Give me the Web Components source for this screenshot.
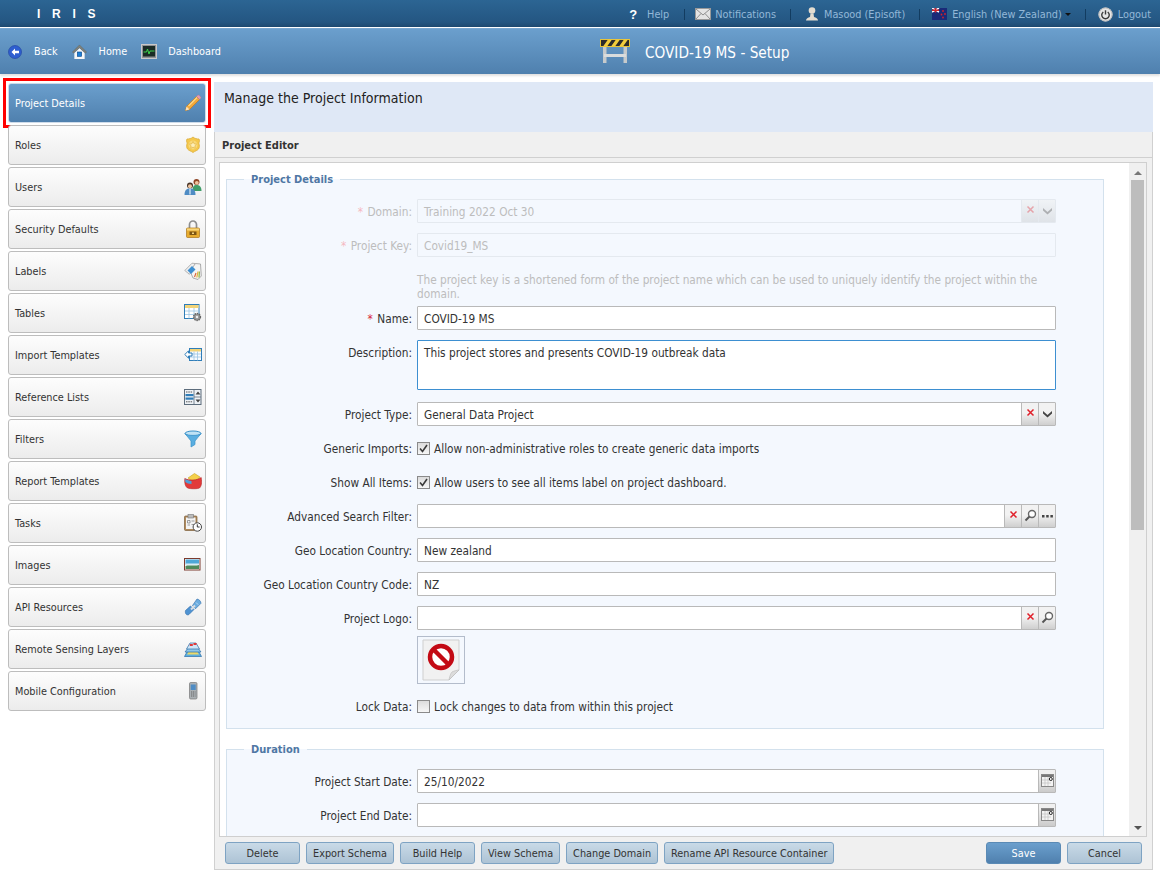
<!DOCTYPE html>
<html lang="en">
<head>
<meta charset="utf-8">
<title>IRIS - Setup</title>
<style>
  html, body { margin: 0; height: 881px; overflow: hidden; background: #fff; }
  body { font: 11.75px "DejaVu Sans Condensed", "DejaVu Sans", Tahoma, sans-serif; color: #333; }
</style>
</head>
<body>
<iris-topbar></iris-topbar>
<iris-navbar></iris-navbar>
<iris-layout>
  <side-nav slot="side">
    <side-item active icon="pencil">Project Details</side-item>
    <side-item icon="badge">Roles</side-item>
    <side-item icon="users">Users</side-item>
    <side-item icon="lock">Security Defaults</side-item>
    <side-item icon="tag">Labels</side-item>
    <side-item icon="table">Tables</side-item>
    <side-item icon="import">Import Templates</side-item>
    <side-item icon="list">Reference Lists</side-item>
    <side-item icon="funnel">Filters</side-item>
    <side-item icon="report">Report Templates</side-item>
    <side-item icon="tasks">Tasks</side-item>
    <side-item icon="image">Images</side-item>
    <side-item icon="api">API Resources</side-item>
    <side-item icon="layers">Remote Sensing Layers</side-item>
    <side-item icon="phone">Mobile Configuration</side-item>
  </side-nav>
  <editor-panel heading="Manage the Project Information" title-text="Project Editor">
    <form-group legend="Project Details">
      <form-row label="Domain" required dim><text-field disabled value="Training 2022 Oct 30" buttons="x,down"></text-field></form-row>
      <form-row label="Project Key" required dim><text-field disabled value="Covid19_MS"></text-field></form-row>
      <form-row hint>The project key is a shortened form of the project name which can be used to uniquely identify the project within the domain.</form-row>
      <form-row label="Name" required><text-field value="COVID-19 MS"></text-field></form-row>
      <form-row label="Description" gap="12"><text-field focused rows value="This project stores and presents COVID-19 outbreak data"></text-field></form-row>
      <form-row label="Project Type"><text-field value="General Data Project" buttons="x,down"></text-field></form-row>
      <form-row label="Generic Imports"><check-field checked>Allow non-administrative roles to create generic data imports</check-field></form-row>
      <form-row label="Show All Items"><check-field checked>Allow users to see all items label on project dashboard.</check-field></form-row>
      <form-row label="Advanced Search Filter"><text-field buttons="x,find,more"></text-field></form-row>
      <form-row label="Geo Location Country"><text-field value="New zealand"></text-field></form-row>
      <form-row label="Geo Location Country Code"><text-field value="NZ"></text-field></form-row>
      <form-row label="Project Logo" gap="6"><text-field buttons="x,find"></text-field></form-row>
      <form-row><logo-preview></logo-preview></form-row>
      <form-row label="Lock Data" gap="10"><check-field>Lock changes to data from within this project</check-field></form-row>
    </form-group>
    <form-group legend="Duration">
      <form-row label="Project Start Date"><text-field value="25/10/2022" buttons="cal"></text-field></form-row>
      <form-row label="Project End Date"><text-field buttons="cal"></text-field></form-row>
    </form-group>
    <action-button slot="actions">Delete</action-button>
    <action-button slot="actions">Export Schema</action-button>
    <action-button slot="actions">Build Help</action-button>
    <action-button slot="actions">View Schema</action-button>
    <action-button slot="actions">Change Domain</action-button>
    <action-button slot="actions">Rename API Resource Container</action-button>
    <action-button slot="end" primary>Save</action-button>
    <action-button slot="end">Cancel</action-button>
  </editor-panel>
</iris-layout>

<script>
const ICONS = {
  pencil: `<path d="M2.500 12.500 12.500 2.500l3 3-10 10-4 1z" fill="#f2a93b" stroke="#c97a12" stroke-width=".7"/><path d="M4.500 12 13 3.500" stroke="#fcd98a" stroke-width="1.300"/><path d="M12.500 2.500l1.200-1.200a1 1 0 0 1 1.400 0l1.600 1.600a1 1 0 0 1 0 1.400L15.500 5.500z" fill="#e59ab0" stroke="#b5788c" stroke-width=".4"/><path d="M2.500 12.500l3 3-4 1z" fill="#f7e2bf"/>`,
  badge: `<path d="M3 3c2 0 4.500-.5 6-2 1.500 1.500 4 2 6 2 .8 1.500.4 3-.2 4 .8 2.500.8 4.500-.3 6-1 1.500-3.500 2-5.500 3.500C7 15 4.500 14.500 3.500 13c-1.100-1.500-1.100-3.500-.3-6C2.600 6 2.200 4.500 3 3z" fill="#f5c84c" stroke="#dcae3c" stroke-width=".8"/><circle cx="9" cy="9" r="4.500" fill="#f9d978"/><path d="M9 5.500l1.100 2.300 2.500.3-1.800 1.700.5 2.500L9 11.100l-2.300 1.200.5-2.500-1.800-1.700 2.500-.3z" fill="#fdeeb8" stroke="#d9a52c" stroke-width=".5"/>`,
  users: `<circle cx="12.500" cy="4" r="3" fill="#8f4526"/><circle cx="12.800" cy="4.800" r="1.900" fill="#eec5a0"/><path d="M8.500 13c0-5 1.500-6 4-6s5 1 5 6z" fill="#3f9d68"/><circle cx="6" cy="7.500" r="3" fill="#4a3426"/><circle cx="6" cy="8.300" r="2" fill="#eec5a0"/><path d="M.5 17c0-5 2-6.500 5.500-6.500s5.500 1.500 5.500 6.500z" fill="#4f8cc4"/><path d="M6 10.500v6" stroke="#fff" stroke-width="1"/>`,
  lock: `<path d="M5.500 8V4.500a3.500 3.500 0 0 1 7 0V8" fill="none" stroke="#8e8e8e" stroke-width="1.700"/><rect x="2.500" y="8" width="13" height="9.500" rx="1" fill="#e8ac2e" stroke="#a9741a" stroke-width=".7"/><rect x="3" y="8.500" width="12" height="2" fill="#f7d67c"/><rect x="5.500" y="11.500" width="7" height="3.500" fill="#7d5513"/><rect x="8" y="12.500" width="2" height="1.500" fill="#f7d67c"/>`,
  tag: `<path d="M.8 8.500 8 1.200l3 .3.400 3.300-6 7.500z" fill="#eee" stroke="#999" stroke-width=".7"/><path d="M6 9 11.500 1.500l5 .5.800 12-3.300 3.500L9 16z" fill="#f4f4f4" stroke="#8c8c8c" stroke-width=".7"/><path d="M3.500 8.500l4.500-4.500 3.500 3.500-4.500 4.500z" fill="#3d8fd1"/><path d="M10.500 15l1.500-4" stroke="#d8643c" stroke-width="1.200"/><path d="M12.800 15.500l1.200-6" stroke="#e8b23a" stroke-width="1.200"/><path d="M15 15.500l.4-6" stroke="#8bb53a" stroke-width="1.200"/>`,
  table: `<rect x=".5" y=".5" width="14.500" height="14" fill="#fff" stroke="#2f7db8"/><rect x="1" y="1" width="13.500" height="3" fill="#f2d479"/><path d="M1 7h13.500M1 10.500h13.500M5 4v10.500M10 4v10.500" stroke="#9cc5e3" stroke-width=".8"/><circle cx="13" cy="13" r="3.400" fill="#9a9a9a" stroke="#666" stroke-width="1.500" stroke-dasharray="1.400 .8"/><circle cx="13" cy="13" r="1.200" fill="#eee"/>`,
  import: `<rect x="5.500" y="2.500" width="12" height="12" fill="#f7fbff" stroke="#2f7db8"/><rect x="6" y="3" width="11" height="2.500" fill="#f2d479"/><path d="M6 8h11M6 11h11M10 5.500v9M13.500 5.500v9" stroke="#9cc5e3" stroke-width=".8"/><path d="M.8 8.500l3.700-3.700V7H8v3H4.500v2.200z" fill="#fff" stroke="#2f7db8"/>`,
  list: `<rect x=".5" y="1.500" width="16.500" height="15" fill="#eef2f6" stroke="#5d6d7c"/><path d="M10 1.500v15M10 9h7" stroke="#5d6d7c" stroke-width=".8"/><path d="M2 4h6.500M2 13.800h6.500" stroke="#555" stroke-dasharray="1.500 .8"/><rect x="1.500" y="6" width="8" height="2.200" fill="#2f7db8"/><rect x="1.500" y="9.500" width="8" height="2.200" fill="#2f7db8"/><path d="M11.500 6.500l2.500-3 2.500 3zM11.500 11.500l2.500 3 2.500-3z" fill="#444"/>`,
  funnel: `<ellipse cx="9" cy="3.500" rx="8" ry="2.500" fill="#bfe2f5" stroke="#3b92c9"/><path d="M1 3.500 7 11v6l4-2.500V11l6-7.500c-2 2.500-14 2.500-16 0z" fill="#5aaee0" stroke="#3b92c9" stroke-width=".7"/>`,
  report: `<path d="M4 6l6.500-4.500L16 5l-6 5.500z" fill="#f5d04a" stroke="#c9a31f" stroke-width=".6"/><path d="M.8 6.500c3 1.500 5 1.500 8.200 1.500s6-1 8.200-2.500c.8 5.500.3 8.500-1.700 10.500-1.500 1-9.500 1-12 0C1.300 14.500.3 11 .8 6.500z" fill="#e23a3a" stroke="#b52222" stroke-width=".6"/><path d="M1.200 7c2 1 3.800 1.700 6.300 2v3c-3 0-4.500-1-6.200-2z" fill="#4ea0d8"/>`,
  tasks: `<rect x=".5" y="2" width="12.500" height="14.500" rx="1" fill="#b08a5c" stroke="#7d5f3a" stroke-width=".7"/><rect x="2" y="3.500" width="9.500" height="11.500" fill="#f4f4f4"/><rect x="4" y=".5" width="5.500" height="3.500" fill="#bbb" stroke="#777" stroke-width=".6"/><path d="M3.500 6.500h2.500v2.500H3.500zM7.500 7h3M7.500 10.500h3M3.500 11h2.500" fill="none" stroke="#777" stroke-width=".7"/><circle cx="13.300" cy="13" r="4.200" fill="#fff" stroke="#444"/><path d="M13.300 10.300V13h2.300" fill="none" stroke="#222" stroke-width=".9"/>`,
  image: `<rect x=".5" y="2.500" width="15.500" height="11.500" fill="#fff" stroke="#7d3b2e"/><rect x="1.500" y="3.500" width="13.500" height="5" fill="#4da7d8"/><rect x="1.500" y="7.500" width="13.500" height="2" fill="#d9ecf4"/><path d="M1.500 13v-3c4-1.500 9 .5 13.500-1v4z" fill="#4f8a5c"/>`,
  api: `<path d="M1.500 12.500 6.500 8l3.500 3.500-5 5c-1 .6-2.200.6-3-.4-.8-1-.7-2.800-.5-3.600z" fill="#4f93d2" stroke="#2c6aa8" stroke-width=".6"/><path d="M8.500 7.500 13 1c2 .2 4 2.300 4 4.300l-5.500 5.500z" fill="#6bacdf" stroke="#2c6aa8" stroke-width=".6"/><path d="M7 11.500 11 7.500" stroke="#d8dee3" stroke-width="2"/><path d="M12 4.500l2.200 2.200" stroke="#bcdcf5"/>`,
  layers: `<path d="M.5 16.500l3-5.500h11l3 5.500z" fill="#5aaee0" stroke="#2a6da7" stroke-width=".7"/><path d="M3 14.500l2-3.500h8l2 3.500z" fill="#ecd96a"/><path d="M1 12l3.500-4.500h9L17 12z" fill="#8fc7ea" stroke="#2a6da7" stroke-width=".7"/><path d="M2.500 9 6 3h6l3.500 6z" fill="#cfe6f7" stroke="#2a6da7" stroke-width=".7"/><rect x="5.800" y="4" width="3" height="2" fill="#e23a3a"/><rect x="9.500" y="3" width="3" height="2" fill="#e23a3a"/>`,
  phone: `<rect x="5.500" y=".5" width="7.500" height="16.500" rx="1.200" fill="#aab0b4" stroke="#777" stroke-width=".7"/><rect x="6.700" y="2.500" width="5" height="5.500" fill="#4f8cc4"/><path d="M7 10h4.500M7 12h4.500M7 14h4.500" stroke="#666" stroke-dasharray="1.200 .7"/>`,
  mail: `<rect x=".5" y="1.500" width="15" height="11" fill="#e4e4e4" stroke="#999"/><path d="M1 2l7 6 7-6M1 12l5-5.500M15 12l-5-5.500" fill="none" stroke="#8f8f8f"/>`,
  user: `<circle cx="8" cy="4.500" r="3.300" fill="#e4ddd0"/><path d="M6.500 7.500h3l.5 3.500c2 .5 4 1.500 4 3.500H2c0-2 2-3 4-3.500z" fill="#e4ddd0"/>`,
  power: `<circle cx="8" cy="8" r="7.500" fill="#e6e6e6"/><circle cx="8" cy="8" r="7" fill="none" stroke="#b8b8b8"/><path d="M5.600 5.300a4 4 0 1 0 4.800 0" fill="none" stroke="#3a3a3a" stroke-width="1.500"/><path d="M8 3.500v4.500" stroke="#3a3a3a" stroke-width="1.500"/>`,
  back: `<circle cx="7" cy="7" r="6.500" fill="#2f5fd0" stroke="#1f3f9f" stroke-width=".6"/><path d="M7 3.500 3.500 7 7 10.500V8.300h4V5.700H7z" fill="#fff"/>`,
  home: `<path d="M8 .5.500 8l1.200 1.200L8 3.500l6.300 5.700L15.500 8z" fill="#80827c" stroke="#5f615b" stroke-width=".5"/><path d="M2.500 9 8 4l5.500 5v6.500h-11z" fill="#f6f6f6"/><rect x="5.700" y="8" width="4.600" height="4.600" fill="#1d7fd6" stroke="#0e4c8f" stroke-width=".7"/>`,
  monitor: `<rect x=".5" y=".5" width="15" height="14" fill="#8f9194" stroke="#c9c9c9"/><rect x="2" y="2" width="12" height="10.500" fill="#1a2b26"/><path d="M2.500 8h3l1-3 1.500 5 1-3h4.500" fill="none" stroke="#3ed24c"/>`,
  barrier: `<rect x="3" y="5" width="3.500" height="19" fill="#c6cacc"/><rect x="23.500" y="5" width="3.500" height="19" fill="#c6cacc"/><rect x="4" y="15" width="22" height="3" fill="#d9dcdd"/><rect x=".5" y=".5" width="29" height="7" fill="#2b2b2b" stroke="#e6c33a"/><path d="M3 7.500 8 .5h4L7 7.500zM11 7.500l5-7h4l-5 7zM19 7.500l5-7h4l-5 7z" fill="#f2cd3c"/>`
};

const svg = (name, w, h, vb) => `<svg width="${w}" height="${h}" viewBox="${vb || `0 0 ${w} ${h}`}" aria-hidden="true">${ICONS[name]}</svg>`;

class IrisTopbar extends HTMLElement {
  constructor() {
    super();
    this.attachShadow({mode: 'open'}).innerHTML = `
      <style>
        :host {
          display: flex; align-items: center; height: 27px; box-sizing: border-box; padding-top: 2px;
          background: linear-gradient(#2c6593, #245682 85%, #1f4c74); border-bottom: 1px solid #1d4a72;
          color: #93b8d8; padding-left: 37px; overflow: hidden; font-size: 10.8px;
        }
        .logo { font: bold 12px "Liberation Sans", sans-serif; color: #fff; word-spacing: 2.4px; letter-spacing: 3px; flex: 1; }
        .item { display: flex; align-items: center; gap: 4px; }
        .sep { width: 1px; height: 11px; background: #123c60; }
        .q { color: #fff; font: bold 13px "Liberation Sans", sans-serif; margin-right: 6px; }
        .caret { width: 0; height: 0; border: 3px solid transparent; border-top-color: #111; margin: 3px 0 0 -1px; }
        svg { display: block; }
      </style>
      <div class="logo">I R I S</div>
      <div class="item" style="margin-right:15px"><span class="q">?</span>Help</div>
      <div class="sep"></div>
      <div class="item" style="margin:0 14px 0 10px">${svg('mail', 16, 14)}Notifications</div>
      <div class="sep"></div>
      <div class="item" style="margin:0 14px 0 13px">${svg('user', 16, 16)}Masood (Episoft)</div>
      <div class="sep"></div>
      <div class="item" style="margin:0 14px 0 12px">
        <svg width="15" height="12" viewBox="0 0 15 12"><rect width="15" height="12" fill="#1a2a78"/><path d="M0 0l7 4M7 0 0 4" stroke="#fff" stroke-width="1.500"/><path d="M3.500 0v4.500M0 2.200h7" stroke="#d2232a" stroke-width="1.500"/><circle cx="11" cy="3" r=".9" fill="#d2232a"/><circle cx="13" cy="6" r=".9" fill="#d2232a"/><circle cx="9.500" cy="6.500" r=".9" fill="#d2232a"/><circle cx="11" cy="9.500" r=".9" fill="#d2232a"/></svg>
        <span style="margin-left:1px">English (New Zealand)</span><span class="caret"></span>
      </div>
      <div class="sep"></div>
      <div class="item" style="margin:0 9px 0 12px;gap:5px">${svg('power', 15, 15, '0 0 16 16')}Logout</div>
    `;
  }
}

class IrisNavbar extends HTMLElement {
  constructor() {
    super();
    this.attachShadow({mode: 'open'}).innerHTML = `
      <style>
        :host {
          display: grid; grid-template-columns: 600px auto 1fr; align-items: center; height: 46px; margin-top: 1px; box-sizing: border-box;
          background: linear-gradient(#6b9fcd, #4f80ae); color: #fff; border-top: 1px solid #7aa8d2;
          box-shadow: 0 2px 2px #e2e2e2;
        }
        .links { display: flex; align-items: center; padding-left: 8px; font-size: 10.8px; }
        .links span { margin: 0 14px 0 12px; }
        .title { display: flex; align-items: center; gap: 15px; font-size: 15.2px; }
        .title span { margin-top: 2px; }
        .title svg { margin-bottom: 2px; }
        svg { display: block; }
      </style>
      <div class="links">
        ${svg('back', 14, 14)}<span>Back</span>${svg('home', 15, 16, '0 0 16 16')}<span>Home</span>${svg('monitor', 16, 15)}<span style="margin-left:11px">Dashboard</span>
      </div>
      <div class="title">${svg('barrier', 30, 24)}<span>COVID-19 MS - Setup</span></div>
      <div></div>
    `;
  }
}

class IrisLayout extends HTMLElement {
  constructor() {
    super();
    this.attachShadow({mode: 'open'}).innerHTML = `
      <style>
        :host { display: grid; grid-template-columns: 214px 939px; padding-top: 8px; }
      </style>
      <slot name="side"></slot>
      <slot></slot>
    `;
  }
}

class SideNav extends HTMLElement {
  constructor() {
    super();
    this.attachShadow({mode: 'open'}).innerHTML = `
      <style>
        :host { display: flex; flex-direction: column; gap: 2px; padding: 1px 8px 0; }
      </style>
      <slot></slot>
    `;
  }
}

class SideItem extends HTMLElement {
  constructor() {
    super();
    this.attachShadow({mode: 'open'}).innerHTML = `
      <style>
        :host { display: block; height: 40px; font-size: 10.8px; }
        :host([active]) { outline: 3px solid #f00; outline-offset: 2px; }
        .btn {
          display: flex; align-items: center; justify-content: space-between; height: 100%; box-sizing: border-box;
          padding: 0 3px 0 6px; border: 1px solid #bdbdbd; border-radius: 3px;
          background: linear-gradient(#fdfdfd, #ececec); color: #333;
        }
        :host([active]) .btn { background: linear-gradient(#6b9fcd, #4f80ae); color: #fff; border-color: #cfdcea; }
        svg { display: block; }
      </style>
      <div class="btn"><slot></slot>${svg(this.getAttribute('icon'), 18, 18)}</div>
    `;
  }
}

class EditorPanel extends HTMLElement {
  constructor() {
    super();
    this.attachShadow({mode: 'open'}).innerHTML = `
      <style>
        :host { display: block; }
        .intro { height: 50px; box-sizing: border-box; background: #dfe8f6; padding: 8px 10px; font-size: 14px; color: #222; line-height: 16px; }
        .panel { border: 1px solid #d0d0d0; border-top: 0; background: #f0f0f0; height: 738px; box-sizing: border-box; }
        .title { height: 25px; line-height: 28px; padding-left: 7px; font-weight: bold; font-size: 11px; color: #333; border-bottom: 1px solid #d0d0d0; box-sizing: content-box; }
        .body { display: flex; height: 675px; margin: 4px 5px 0 4px; border: 1px solid #cfcfcf; background: #fff; box-sizing: border-box; }
        .scroll { flex: 1; overflow: hidden; padding: 0 25px 0 6px; }
        .bar { width: 17px; background: #f0f0f0; display: flex; flex-direction: column; align-items: center; }
        .up, .down { width: 0; height: 0; border: 4px solid transparent; }
        .up { border-bottom-color: #777; margin-top: 4px; }
        .down { border-top-color: #555; margin-top: auto; margin-bottom: 2px; }
        .thumb { width: 13px; height: 350px; background: #bdbdbd; margin-top: 5px; }
        .foot { display: flex; justify-content: space-between; padding: 5px 10px 0; }
        .group { display: flex; gap: 6px; }
      </style>
      <div class="intro">${this.getAttribute('heading')}</div>
      <div class="panel">
        <div class="title">${this.getAttribute('title-text')}</div>
        <div class="body">
          <div class="scroll"><slot></slot></div>
          <div class="bar"><div class="up"></div><div class="thumb"></div><div class="down"></div></div>
        </div>
        <div class="foot">
          <div class="group"><slot name="actions"></slot></div>
          <div class="group"><slot name="end"></slot></div>
        </div>
      </div>
    `;
  }
}

class FormGroup extends HTMLElement {
  constructor() {
    super();
    this.attachShadow({mode: 'open'}).innerHTML = `
      <style>
        :host { display: block; margin-top: 8px; margin-bottom: 12px; }
        fieldset { margin: 0; padding: 12px 0 0; border: 1px solid #d3e1ed; background: #f4f8fe; min-width: 0; }
        legend { margin-left: 17px; padding: 2px 7px 0; font-weight: bold; font-size: 11px; color: #4f77a4; line-height: 14px; }
      </style>
      <fieldset>
        <legend>${this.getAttribute('legend')}</legend>
        <slot></slot>
      </fieldset>
    `;
  }
}

class FormRow extends HTMLElement {
  constructor() {
    super();
    const label = this.getAttribute('label');
    const gap = this.getAttribute('gap') || 10;
    const star = this.hasAttribute('required') ? '<b>*</b> ' : '';
    this.attachShadow({mode: 'open'}).innerHTML = `
      <style>
        :host { display: grid; grid-template-columns: 185px 639px; column-gap: 5px; margin-bottom: ${gap}px; }
        :host([hint]) { color: #bdbdbd; line-height: 14px; margin-bottom: 5px; padding-top: 6px; }
        :host([dim]) .label { color: #bdbdbd; }
        :host([dim]) b { color: #f4b9c1; }
        .label { text-align: right; line-height: 22px; padding-top: 2px; color: #333; white-space: nowrap; }
        b { color: #d8263a; font-weight: normal; margin-right: 1px; }
      </style>
      <div class="label">${label ? `${star}${label}:` : ''}</div>
      <div><slot></slot></div>
    `;
  }
}

class TextField extends HTMLElement {
  constructor() {
    super();
    const buttons = (this.getAttribute('buttons') || '').split(',').filter(Boolean);
    const glyphs = {
      x: `<svg width="11" height="11" viewBox="0 0 11 11"><path d="M2.500 2.500l6 6M8.500 2.500l-6 6" stroke="#e0202a" stroke-width="1.500"/></svg>`,
      down: `<svg width="11" height="8" viewBox="0 0 11 8"><path d="M1 1l4.500 4L10 1v2.500L5.500 7.500 1 3.500z" fill="#444"/></svg>`,
      find: `<svg width="13" height="13" viewBox="0 0 13 13"><circle cx="8" cy="5" r="3.500" fill="#fff" stroke="#666" stroke-width="1.400"/><path d="M5.500 7.500 1.500 11.500" stroke="#555" stroke-width="2"/></svg>`,
      more: `<svg width="13" height="5" viewBox="0 0 13 5"><path d="M1 1h2.500v2.500H1zM5.200 1h2.500v2.500H5.200zM9.400 1h2.500v2.500H9.400z" fill="#444"/></svg>`,
      cal: `<svg width="13" height="13" viewBox="0 0 13 13"><rect x=".5" y=".5" width="12" height="12" fill="#f3f3f3" stroke="#888"/><rect x="1" y="1" width="11" height="2" fill="#777"/><path d="M1 6h9M1 9h9M4 3v9M7 3v9" stroke="#bbb" stroke-width=".6"/><circle cx="9.800" cy="5" r="1.500" fill="#fff" stroke="#222"/></svg>`
    };
    const btns = buttons.map(b => `<span class="btn ${b}">${glyphs[b]}</span>`).join('');
    const value = this.getAttribute('value') || '';
    this.attachShadow({mode: 'open'}).innerHTML = `
      <style>
        :host {
          display: flex; height: 24px; box-sizing: border-box; border: 1px solid #b9b9b9; background: #fff; border-radius: 1px; color: #333;
        }
        :host([rows]) { height: 50px; }
        :host([focused]) { border-color: #3d8fd1; }
        :host([disabled]) { border-color: #e4e9ef; background: #f4f8fe; color: #bdbdbd; }
        .val { flex: 1; padding: 1px 6px 0; line-height: 22px; white-space: nowrap; overflow: hidden; }
        .btn {
          width: 17px; display: flex; justify-content: center; padding-top: 4px; box-sizing: border-box; align-items: flex-start;
          border-left: 1px solid #b9b9b9; background: linear-gradient(#f2f2f2 45%, #cfcfcf);
        }
        .btn.down { padding-top: 7px; } .btn.more { padding-top: 9px; }
        .btn.cal { background: linear-gradient(#f0f0f0 20%, #cbcbcb); }
        :host([disabled]) .btn { border-color: #e4e9ef; background: linear-gradient(#f0f3f6, #dfe3e8); }
        :host([disabled]) .btn svg { opacity: .35; }
        svg { display: block; }
      </style>
      <div class="val">${value}</div>${btns}
    `;
  }
}

class CheckField extends HTMLElement {
  constructor() {
    super();
    const tick = this.hasAttribute('checked')
      ? `<svg width="11" height="11" viewBox="0 0 11 11"><path d="M2 5.500l2.500 3L9 2" fill="none" stroke="#3a3a3a" stroke-width="1.600"/></svg>` : '';
    this.attachShadow({mode: 'open'}).innerHTML = `
      <style>
        :host { display: flex; align-items: center; gap: 4px; height: 24px; box-sizing: border-box; padding-top: 1px; color: #333; }
        .box { width: 11px; height: 11px; border: 1px solid #8a8a8a; background: linear-gradient(#dcdcdc, #f6f6f6); }
        svg { display: block; }
      </style>
      <span class="box">${tick}</span><slot></slot>
    `;
  }
}

class LogoPreview extends HTMLElement {
  constructor() {
    super();
    this.attachShadow({mode: 'open'}).innerHTML = `
      <style>
        :host { display: flex; align-items: center; justify-content: center; width: 48px; height: 48px; box-sizing: border-box; border: 1px solid #b3bccb; }
        svg { display: block; }
      </style>
      <svg width="38" height="42" viewBox="0 0 38 42">
        <path d="M1 1h36v30L27 41H1z" fill="#f1f1f1" stroke="#cfcfcf"/>
        <path d="M27 41c1-5 2-7 3-8 2-1 5-2 7-2z" fill="#dcdcdc" stroke="#bdbdbd" stroke-width=".7"/>
        <circle cx="19" cy="18" r="11" fill="#fff" stroke="#c30a14" stroke-width="4.500"/>
        <path d="M11 10l16 16" stroke="#c30a14" stroke-width="4.500"/>
      </svg>
    `;
  }
}

class ActionButton extends HTMLElement {
  constructor() {
    super();
    this.attachShadow({mode: 'open'}).innerHTML = `
      <style>
        :host {
          display: block; min-width: 75px; height: 22px; line-height: 21px; box-sizing: border-box; text-align: center; padding: 0 6px; font-size: 10.8px;
          border: 1px solid #7ea3c3; border-radius: 3px; background: linear-gradient(#c9dae7, #adc3d5); color: #333;
        }
        :host([primary]) { background: linear-gradient(#6b9fcd, #4f80ae); border-color: #5a8ab5; color: #fff; }
      </style>
      <slot></slot>
    `;
  }
}

customElements.define('iris-topbar', IrisTopbar);
customElements.define('iris-navbar', IrisNavbar);
customElements.define('iris-layout', IrisLayout);
customElements.define('side-nav', SideNav);
customElements.define('side-item', SideItem);
customElements.define('editor-panel', EditorPanel);
customElements.define('form-group', FormGroup);
customElements.define('form-row', FormRow);
customElements.define('text-field', TextField);
customElements.define('check-field', CheckField);
customElements.define('logo-preview', LogoPreview);
customElements.define('action-button', ActionButton);
</script>
</body>
</html>
